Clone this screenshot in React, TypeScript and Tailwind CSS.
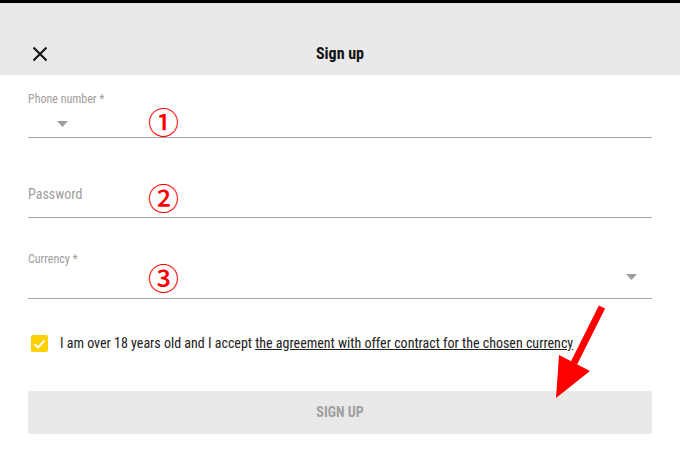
import React from "react";

const font = { fontFamily: '"Roboto Condensed", Roboto, "Liberation Sans", sans-serif' };

function Caret() {
  return (
    <svg width="11" height="6" viewBox="0 0 11 6" className="block">
      <path d="M0 0 L11 0 L5.5 6 Z" fill="#9e9e9e" />
    </svg>
  );
}

// red circled numbers drawn over the form (annotation)
function Mark({ n, className = "" }: { n: string; className?: string }) {
  return (
    <span
      className={`text-[31px] leading-[30px] font-medium text-[#ff0000] ${className}`}
      style={{ fontFamily: '"Noto Sans CJK JP", sans-serif' }}
    >
      {n}
    </span>
  );
}

export default function App() {
  return (
    <div className="relative w-[680px] h-[452px] bg-white overflow-hidden font-stretch-condensed" style={font}>
      <div className="h-[3px] bg-black" />
      {/* Header */}
      <header className="h-[72px] bg-[#e9e9e9] grid grid-cols-[1fr_auto_1fr] items-center pt-[30px] px-[28px]">
        <button className="w-[24px] h-[24px] flex items-center justify-center">
          <svg width="16" height="16" viewBox="0 0 16 16">
            <path d="M1.5 1.5 L14.5 14.5 M14.5 1.5 L1.5 14.5" stroke="#111" strokeWidth="2" />
          </svg>
        </button>
        <h1 className="text-[16px] font-bold text-[#111]">Sign up</h1>
        <span />
      </header>

      <form className="px-[28px]">
        {/* Phone */}
        <div className="h-[63px] border-b border-[#a5a5a5] pt-[17px] flex flex-col">
          <label className="text-[12px] leading-[14px] text-[#9e9e9e]">Phone number *</label>
          <div className="flex-1 flex items-center">
            <div className="w-[120px] pl-[29px]">
              <Caret />
            </div>
            <Mark n="①" className="mb-[6px]" />
          </div>
        </div>

        {/* Password */}
        <div className="h-[80px] border-b border-[#a5a5a5] flex items-end pb-[5px]">
          <label className="w-[120px] mb-[10px] text-[14px] leading-[16px] text-[#9e9e9e]">Password</label>
          <Mark n="②" />
        </div>

        {/* Currency */}
        <div className="h-[81px] border-b border-[#a5a5a5] pt-[34px] flex flex-col">
          <label className="text-[12px] leading-[14px] text-[#9e9e9e]">Currency *</label>
          <div className="flex items-start justify-between pl-[120px] pr-[15px] -mt-[4px]">
            <Mark n="③" />
            <div className="pt-[12px]">
              <Caret />
            </div>
          </div>
        </div>

        {/* Agreement */}
        <div className="flex items-center mt-[36px] pl-[3px] h-[17px]">
          <span className="w-[17px] h-[17px] rounded-[2px] bg-[#fdd100] flex items-center justify-center">
            <svg width="13" height="10" viewBox="0 0 13 10">
              <path d="M1.5 5 L5 8.5 L11.5 1.5" stroke="#fff" strokeWidth="2" fill="none" />
            </svg>
          </span>
          <p className="ml-[12px] text-[14px] text-[#222]">
            I am over 18 years old and I accept{" "}
            <a className="underline">the agreement with offer contract for the chosen currency</a>
          </p>
        </div>

        <button
          type="button"
          className="mt-[39px] w-full h-[43px] rounded-[2px] bg-[#e9e9e9] text-[14px] font-bold text-[#a0a0a0] uppercase"
        >
          Sign up
        </button>
      </form>

      {/* Annotation arrow */}
      <svg className="absolute left-0 top-0 pointer-events-none" width="680" height="452">
        <path d="M602 307 L574 363" stroke="#ff0000" strokeWidth="7" />
        <path d="M556 398 L559 355 L590 371 Z" fill="#ff0000" />
      </svg>
    </div>
  );
}
